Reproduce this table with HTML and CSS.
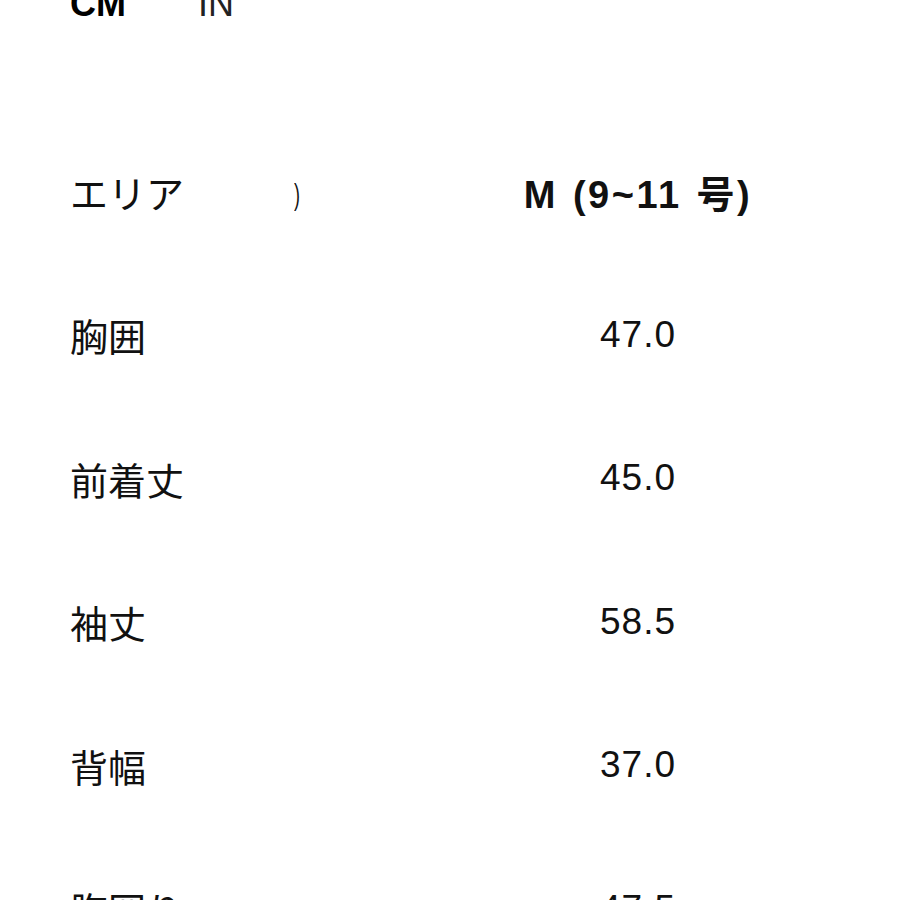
FILE: index.html
```html
<!DOCTYPE html>
<html lang="ja">
<head>
<meta charset="utf-8">
<link rel="stylesheet" href="styles.css">
</head>
<body>
<div class="page">
  <div class="units">
    <span class="unit active">CM</span>
    <span class="unit">IN</span>
  </div>
  <div class="table">
    <div class="row head">
      <div class="label">エリア<span class="stray">)</span></div>
      <div class="value">M (9~11 号)</div>
    </div>
    <div class="row">
      <div class="label">胸囲</div>
      <div class="value">47.0</div>
    </div>
    <div class="row">
      <div class="label">前着丈</div>
      <div class="value">45.0</div>
    </div>
    <div class="row">
      <div class="label">袖丈</div>
      <div class="value">58.5</div>
    </div>
    <div class="row">
      <div class="label">背幅</div>
      <div class="value">37.0</div>
    </div>
    <div class="row">
      <div class="label">胸囲り</div>
      <div class="value">47.5</div>
    </div>
  </div>
</div>
</body>
</html>
```
FILE: styles.css
```css
html, body {
  margin: 0;
  padding: 0;
  background: #fff;
  overflow: hidden;
}
body {
  width: 900px;
  height: 900px;
  font-family: "Liberation Sans", "Noto Sans CJK JP", sans-serif;
  color: #111;
}
.page {
  padding-left: 70px;
}
.units {
  display: flex;
  gap: 72px;
  margin-top: -18px;
  height: 44px;
  font-size: 36px;
  line-height: 44px;
}
.unit {
  font-weight: 300;
  color: #222;
}
.unit.active {
  font-weight: 700;
  color: #000;
}
.table {
  margin-top: 130px;
}
.row {
  display: flex;
  align-items: center;
  height: 143.5px;
  font-size: 38px;
}
.row.head {
  height: 70px;
  margin-bottom: 37px;
}
.label {
  width: 400px;
  position: relative;
  font-family: "Noto Sans CJK JP", sans-serif;
  font-weight: 400;
}
.stray {
  position: absolute;
  left: 222px;
  top: 14px;
  font-family: "Liberation Sans", sans-serif;
  font-size: 30px;
  transform: scaleX(0.6);
}
.value {
  width: 336px;
  text-align: center;
  font-size: 37px;
  letter-spacing: 1px;
}
.head .value {
  font-size: 38px;
  font-weight: 700;
  letter-spacing: 2.5px;
  word-spacing: 2px;
}
```
